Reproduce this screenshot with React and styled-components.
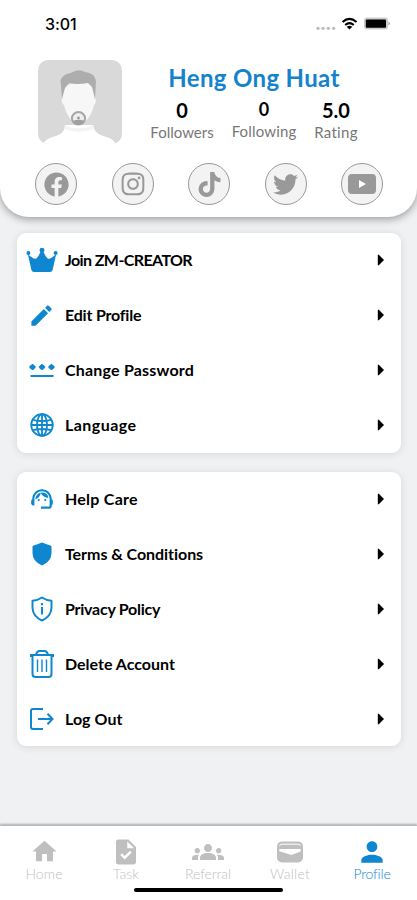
import styled, { createGlobalStyle } from "styled-components";
import { FaFacebook, FaInstagram, FaTiktok, FaTwitter } from "react-icons/fa";
import { MdEdit, MdHome, MdTask, MdGroups, MdPerson, MdSupportAgent } from "react-icons/md";

const GlobalStyle = createGlobalStyle`
  * {
    box-sizing: border-box;
  }
  body {
    margin: 0;
    background: #f0f1f3;
    font-family: Lato, "Liberation Sans", sans-serif;
    font-variant-ligatures: none;
  }
`;

const Screen = styled.div`
  height: 900px;
  display: flex;
  flex-direction: column;
  background: #f0f1f3;
  overflow: hidden;
`;

const Header = styled.header`
  height: 217px;
  background: #fff;
  border-radius: 0 0 29px 29px;
  box-shadow: 0 2px 8px rgba(0, 0, 0, 0.38);
`;

const StatusBar = styled.div`
  height: 60px;
  padding: 13px 27px 0 45px;
  display: flex;
  justify-content: space-between;
`;

const Time = styled.span`
  font: 500 16px/23px Inter, sans-serif;
  letter-spacing: -0.1px;
`;

const UserInfo = styled.div`
  height: 84px;
  display: flex;
  padding-left: 38px;
`;

const Avatar = styled.svg`
  width: 84px;
  height: 84px;
  border-radius: 10px;
`;

const Details = styled.div`
  width: 222px;
  margin-left: 21px;
`;

const Name = styled.h1`
  margin: 4px 0 0;
  font-size: 24px;
  line-height: 28px;
  font-weight: 700;
  letter-spacing: 0.35px;
  color: #1583cc;
  text-align: center;
  white-space: nowrap;
`;

const Stats = styled.div`
  display: grid;
  grid-template-columns: 78px 86px 58px;
  margin-top: 6px;
`;

const Stat = styled.div`
  display: flex;
  flex-direction: column;
  align-items: center;
`;

const StatValue = styled.span`
  font-size: ${(p) => (p.$small ? "18px" : "20px")};
  line-height: ${(p) => (p.$small ? "23px" : "24px")};
  font-weight: 700;
`;

const StatLabel = styled.span`
  font-size: 15px;
  line-height: 21px;
  letter-spacing: ${(p) => p.$spacing || 0}px;
  color: #777;
`;

const Socials = styled.div`
  display: flex;
  justify-content: space-between;
  padding: 19px 34px 0 35px;
`;

const SocialButton = styled.a`
  width: 42px;
  height: 42px;
  display: flex;
  align-items: center;
  justify-content: center;
  border: 1px solid #999;
  border-radius: 50%;
  background: #f3f3f3;
  color: #999;
`;

const Main = styled.main`
  flex: 1;
  padding: 16px 16px 0 17px;
  display: flex;
  flex-direction: column;
  gap: 19px;
`;

const Card = styled.section`
  background: #fff;
  border-radius: 9px;
  box-shadow: 0 1px 8px rgba(0, 0, 0, 0.11);
`;

const Row = styled.div`
  height: 54.9px;
  display: flex;
  align-items: center;
  padding: 0 16px 0 8px;
`;

const IconBox = styled.span`
  width: 33px;
  display: flex;
  justify-content: center;
  margin-right: 7px;
  color: #0f87d0;
`;

const RowLabel = styled.span`
  flex: 1;
  padding-bottom: 1px;
  font-size: 16px;
  font-weight: 700;
  letter-spacing: ${(p) => p.$spacing || 0}px;
`;

const TabBar = styled.nav`
  height: 75px;
  padding: 12px 4px 0 3px;
  background: #fff;
  border-top: 1px solid #bbb;
  box-shadow: 0 -1px 2px rgba(0, 0, 0, 0.28);
`;

const Tabs = styled.div`
  display: grid;
  grid-template-columns: repeat(5, 82px);
  height: 49px;
`;

const Tab = styled.a`
  display: flex;
  flex-direction: column;
  align-items: center;
  color: ${(p) => (p.$active ? "#0f87d0" : "#bfbfbf")};
`;

const TabIcon = styled.span`
  height: 27px;
  display: flex;
  align-items: center;
`;

const TabLabel = styled.span`
  font-size: 14px;
  line-height: 18px;
  font-weight: 300;
  letter-spacing: ${(p) => p.$spacing || 0}px;
`;

const HomeIndicator = styled.div`
  width: 149px;
  height: 4px;
  margin: 1px auto 0;
  border-radius: 2px;
  background: #000;
`;

const StatusIcons = () => (
  <svg width="76" height="22" viewBox="0 0 76 22">
    <g fill="#bbb">
      <circle cx="4" cy="15.3" r="1.6" />
      <circle cx="9" cy="15.3" r="1.6" />
      <circle cx="14.3" cy="15.3" r="1.6" />
      <circle cx="19.7" cy="15.3" r="1.6" />
    </g>
    <g fill="none" stroke="#000" strokeWidth="2">
      <path d="M28.5 9Q35.5 2.8 42.5 9" />
      <path d="M31.2 12Q35.5 8.2 39.8 12" />
    </g>
    <path d="M32.7 13.7Q35.5 11.7 38.3 13.7L35.5 16.5Z" />
    <rect x="50" y="4.5" width="24" height="12" rx="3" fill="#ccc" />
    <rect x="51.8" y="6.4" width="20.2" height="8.3" rx="1" />
    <path d="M74.5 8.5Q77 10.5 74.5 12.5Z" fill="#999" />
  </svg>
);

const UserPicture = () => (
  <Avatar viewBox="0 0 84 84">
    <rect width="84" height="84" fill="#d9d9d9" />
    <path d="M5 84Q8 78 18 76Q27 73 27 65H55Q56 73 65 76Q75 78 78 84Z" fill="#fff" />
    <path d="M27 65L34 68H48L55 65L55.5 69Q41 75 26.5 69Z" fill="#f4f4f4" />
    <path d="M25 28L24 39Q23 43 26 45Q28 55 35 62Q41 68 47 62Q54 55 56 45Q59 42 57 38V26Q41 17 25 28Z" fill="#f7f7f7" />
    <path d="M24 39L22.5 20Q25 14 33 13Q40 8 47 12Q57 13 58 21L57 39L54 27L50 23Q39 25 31 23L27 28Z" fill="#adadad" />
    <ellipse cx="40.5" cy="58.3" rx="6.6" ry="6.2" fill="#eee" stroke="#a6a6a6" strokeWidth="2" />
    <path d="M34.5 61Q41 58.5 46.5 61Q44 65 40.5 65Q37 65 34.5 61Z" fill="#a0a0a0" />
    <circle cx="40.5" cy="58" r="1.4" fill="#999" />
  </Avatar>
);

const YoutubeIcon = () => (
  <svg width="28" height="20" viewBox="0 0 28 20">
    <rect width="28" height="20" rx="4" fill="#999" />
    <path d="M11 6L18 10L11 14Z" fill="#fff" />
  </svg>
);

const CrownIcon = () => (
  <svg width="32" height="26" viewBox="0 0 32 26" fill="currentColor">
    <path d="M1.8 7Q8 13 10.2 11.5Q12.5 10 14.8 4H17.2Q19.5 10 21.8 11.5Q24 13 30.2 7L26.6 23Q26 25 24 25H8Q6 25 5.4 23Z" />
    <circle cx="2.4" cy="6" r="2" />
    <circle cx="16" cy="3.2" r="2.4" />
    <circle cx="29.6" cy="6" r="2" />
  </svg>
);

const PasswordIcon = () => (
  <svg width="26" height="16" viewBox="0 0 26 16" fill="currentColor">
    <path d="M1.5 14H24.5" stroke="currentColor" strokeWidth="2" />
    {[3.5, 13, 22.5].map((x) => (
      <g key={x}>
        <circle cx={x} cy="5" r="2.6" />
        <path d={`M${x} 2V8M${x - 3.2} 5H${x + 3.2}`} stroke="currentColor" strokeWidth="1.4" />
      </g>
    ))}
  </svg>
);

const GlobeIcon = () => (
  <svg width="24" height="24" viewBox="0 0 24 24" fill="none" stroke="currentColor" strokeWidth="1.8">
    <circle cx="12" cy="12" r="10.8" />
    <ellipse cx="12" cy="12" rx="5" ry="10.8" />
    <path d="M12 1V23M1 12H23M3 6.8Q12 9.2 21 6.8M3 17.2Q12 14.8 21 17.2" />
  </svg>
);

const ShieldIcon = () => (
  <svg width="20" height="24" viewBox="0 0 20 24" fill="currentColor">
    <path d="M10 0.5L19.5 4V11Q19.5 19.5 10 23.5Q0.5 19.5 0.5 11V4Z" />
  </svg>
);

const PrivacyIcon = () => (
  <svg width="22" height="26" viewBox="0 0 22 26" fill="none" stroke="currentColor" strokeWidth="2">
    <path d="M11 1.5Q15 4.3 20.5 4.7V12Q20 20.5 11 24.5Q2 20.5 1.5 12V4.7Q7 4.3 11 1.5Z" strokeLinejoin="round" />
    <path d="M11 11V18.5M11 7V9.2" />
  </svg>
);

const TrashIcon = () => (
  <svg width="24" height="28" viewBox="0 0 24 28" fill="none" stroke="currentColor" strokeWidth="2">
    <path d="M0.8 7V5H23.2V7M2.5 5V24Q2.5 27 5.5 27H18.5Q21.5 27 21.5 24V5M6 4.5Q7 1 9.5 1H14.5Q17 1 18 4.5" />
    <path d="M7.5 9.5V22M12 9.5V22M16.5 9.5V22" strokeWidth="1.4" />
  </svg>
);

const LogoutIcon = () => (
  <svg width="24" height="22" viewBox="0 0 24 22" fill="none" stroke="currentColor" strokeWidth="2">
    <path d="M12 2V1H3Q1 1 1 3V19Q1 21 3 21H12V20" />
    <path d="M8 11H22M17.5 5.8L22.5 11L17.5 16.2" />
  </svg>
);

const WalletIcon = () => (
  <svg width="26" height="22" viewBox="0 0 26 22">
    <rect width="26" height="21" y="0.5" rx="5" fill="currentColor" />
    <path d="M2.5 5Q3 3.2 5 3.2H21Q23 3.2 23.5 5" fill="none" stroke="#fff" strokeWidth="1" />
    <path d="M2.3 8H23.7V10.5L14.5 14L9 12.2L2.3 10.2Z" fill="#fff" />
  </svg>
);

const Arrow = () => (
  <svg width="8" height="12" viewBox="0 0 8 12">
    <path d="M0.8 0.8H1.8L7 6L1.8 11.2H0.8Z" />
  </svg>
);

const socials = [
  <FaFacebook size={25} />,
  <FaInstagram size={26} />,
  <FaTiktok size={25} />,
  <FaTwitter size={25} />,
  <YoutubeIcon />,
];

const account = [
  { label: "Join ZM-CREATOR", icon: <CrownIcon />, spacing: -0.6 },
  { label: "Edit Profile", icon: <MdEdit size={27} />, spacing: -0.2 },
  { label: "Change Password", icon: <PasswordIcon />, spacing: 0.2 },
  { label: "Language", icon: <GlobeIcon />, spacing: 0.45 },
];

const support = [
  { label: "Help Care", icon: <MdSupportAgent size={26} />, spacing: 0.25 },
  { label: "Terms & Conditions", icon: <ShieldIcon />, spacing: -0.05 },
  { label: "Privacy Policy", icon: <PrivacyIcon />, spacing: -0.25 },
  { label: "Delete Account", icon: <TrashIcon />, spacing: 0 },
  { label: "Log Out", icon: <LogoutIcon />, spacing: 0.05 },
];

const tabs = [
  { label: "Home", icon: <MdHome size={29} />, spacing: 0.1 },
  { label: "Task", icon: <MdTask size={30} />, spacing: 0 },
  { label: "Referral", icon: <MdGroups size={32} />, spacing: -0.1 },
  { label: "Wallet", icon: <WalletIcon />, spacing: 0.2 },
  { label: "Profile", icon: <MdPerson size={32} />, active: true, spacing: -0.2 },
];

const Menu = ({ items }) => (
  <Card>
    {items.map((item) => (
      <Row key={item.label}>
        <IconBox>{item.icon}</IconBox>
        <RowLabel $spacing={item.spacing}>{item.label}</RowLabel>
        <Arrow />
      </Row>
    ))}
  </Card>
);

const App = () => {
  return (
    <Screen>
      <GlobalStyle />
      <Header>
        <StatusBar>
          <Time>3:01</Time>
          <StatusIcons />
        </StatusBar>
        <UserInfo>
          <UserPicture />
          <Details>
            <Name>Heng Ong Huat</Name>
            <Stats>
              <Stat>
                <StatValue>0</StatValue>
                <StatLabel>Followers</StatLabel>
              </Stat>
              <Stat>
                <StatValue $small>0</StatValue>
                <StatLabel $spacing={0.15}>Following</StatLabel>
              </Stat>
              <Stat>
                <StatValue>5.0</StatValue>
                <StatLabel $spacing={0.3}>Rating</StatLabel>
              </Stat>
            </Stats>
          </Details>
        </UserInfo>
        <Socials>
          {socials.map((icon, i) => (
            <SocialButton key={i}>{icon}</SocialButton>
          ))}
        </Socials>
      </Header>
      <Main>
        <Menu items={account} />
        <Menu items={support} />
      </Main>
      <TabBar>
        <Tabs>
          {tabs.map((tab) => (
            <Tab key={tab.label} $active={tab.active}>
              <TabIcon>{tab.icon}</TabIcon>
              <TabLabel $spacing={tab.spacing}>{tab.label}</TabLabel>
            </Tab>
          ))}
        </Tabs>
        <HomeIndicator />
      </TabBar>
    </Screen>
  );
};

export default App;
